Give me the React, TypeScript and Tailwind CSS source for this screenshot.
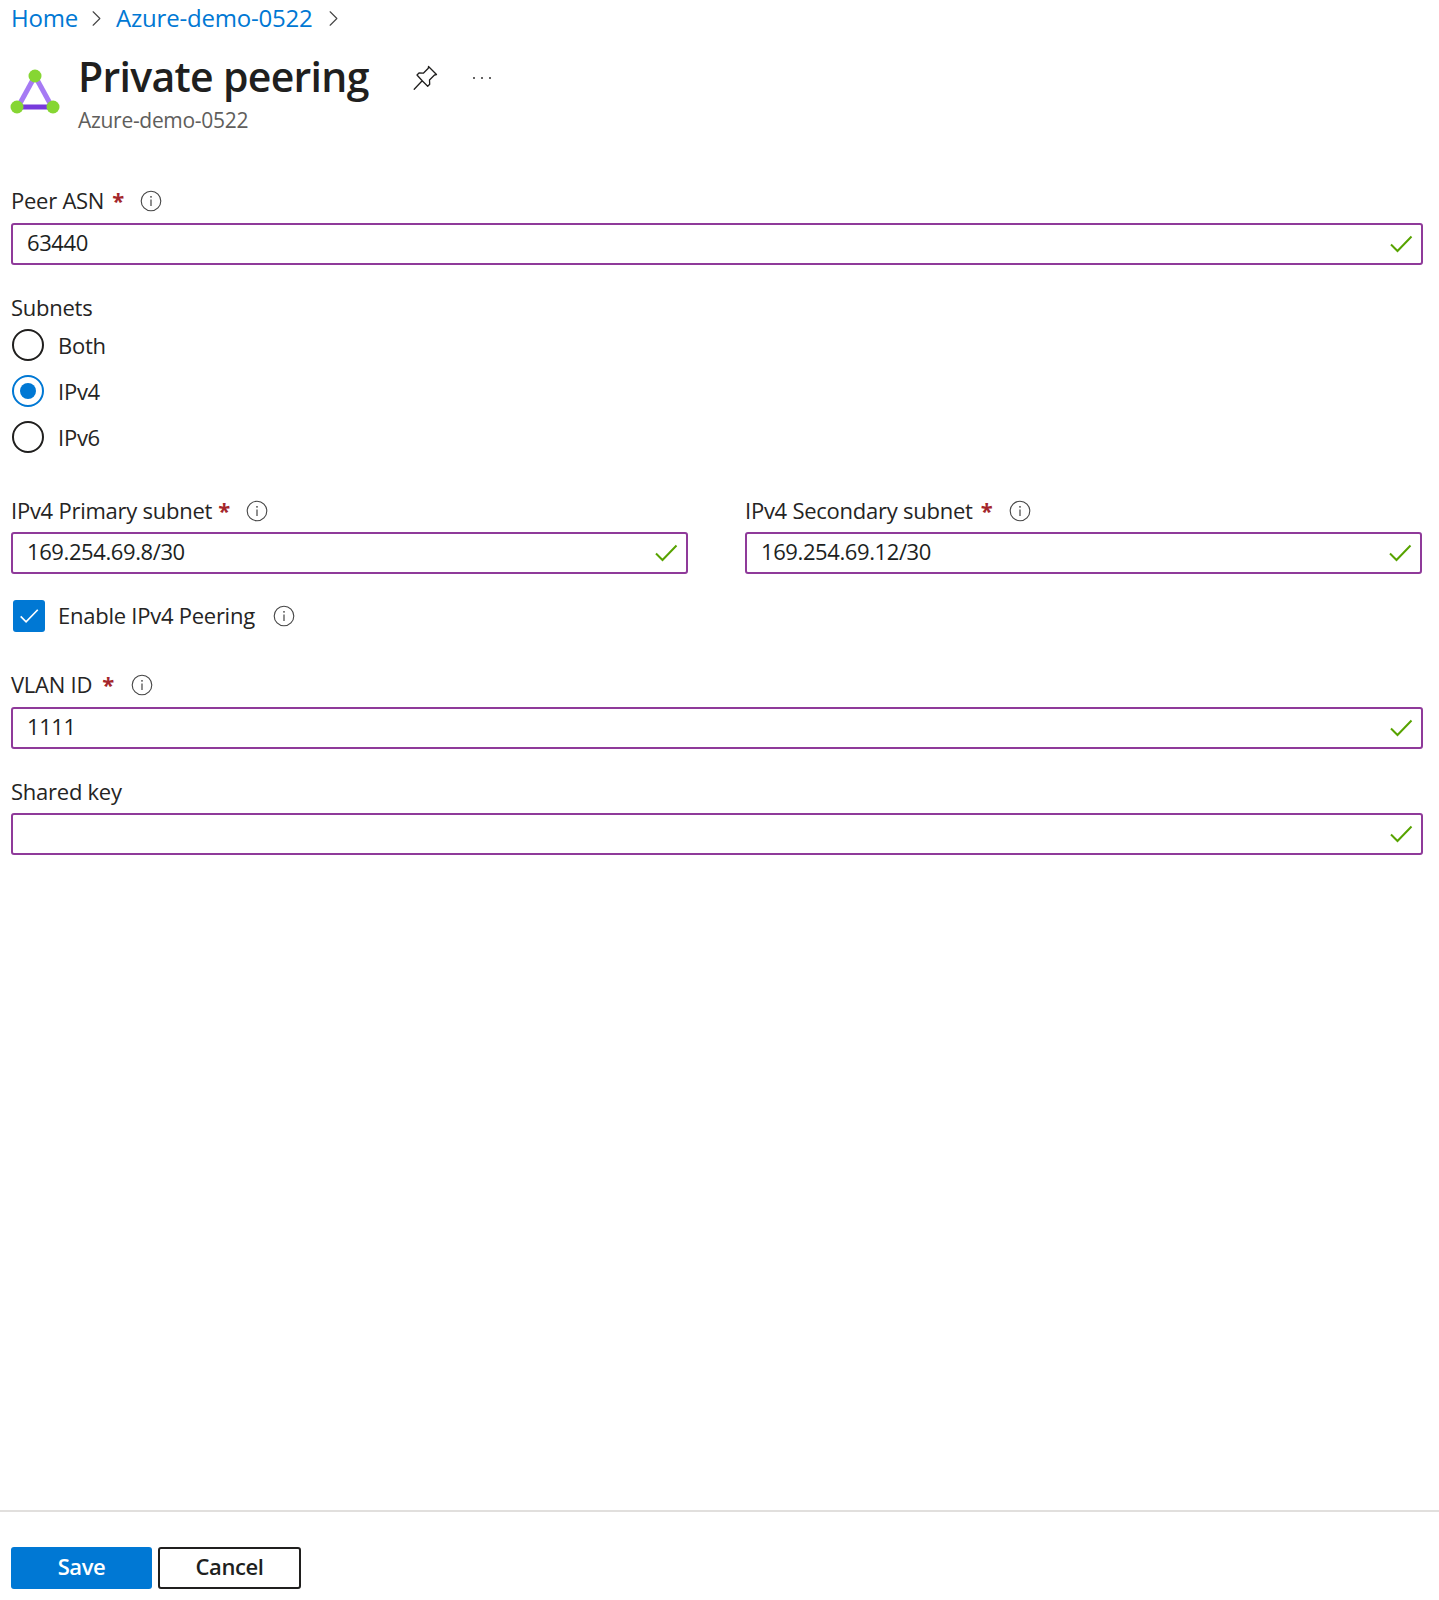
import { ChevronRight } from 'lucide-react'

const font = { fontFamily: '"Open Sans", "Noto Sans", sans-serif' }

function InfoIcon() {
  return (
    <svg width="22" height="22" viewBox="0 0 22 22" fill="none" className="shrink-0">
      <circle cx="11" cy="11" r="9.8" stroke="#444" strokeWidth="1.1" />
      <circle cx="11" cy="6.8" r="0.9" fill="#444" />
      <path d="M11 9.6v6.4" stroke="#444" strokeWidth="1.2" />
    </svg>
  )
}

function Check({ color = '#57a300', size = 24 }: { color?: string; size?: number }) {
  return (
    <svg width={size} height={size} viewBox="0 0 24 24" fill="none">
      <path d="M2 12.5l6.5 6.5L22.5 4.5" stroke={color} strokeWidth="2" />
    </svg>
  )
}

interface LabelProps {
  text: string
  required?: boolean
  starGap?: string
  gap?: string
}

function Label({ text, required, starGap = 'ml-2', gap = 'ml-4' }: LabelProps) {
  return (
    <div className="flex items-center h-[30px] text-[22px] text-[#252423] tracking-[-0.25px]">
      <span className="mb-[2px]">{text}</span>
      {required && <span className={`${starGap} mb-[2px] text-[#a4262c] font-bold`}>*</span>}
      {required && (
        <span className={gap}>
          <InfoIcon />
        </span>
      )}
    </div>
  )
}

function Field({ value }: { value?: string }) {
  return (
    <div className="flex items-center justify-between h-[42px] border-2 border-[#8f3a9a] rounded-[3px] pl-[14px] pr-[8px] text-[22px] text-[#201f1e] tracking-[-0.4px]">
      <span className="mb-[3px]">{value}</span>
      <Check />
    </div>
  )
}

function Radio({ label, checked }: { label: string; checked?: boolean }) {
  return (
    <div className="flex items-center h-[46px] pl-[1px] text-[22px] text-[#252423] tracking-[-0.25px]">
      <span
        className={`flex items-center justify-center w-[32px] h-[32px] rounded-full border-2 ${
          checked ? 'border-[#0078d4]' : 'border-[#201f1e]'
        }`}
      >
        {checked && <span className="w-[16px] h-[16px] rounded-full bg-[#0078d4]" />}
      </span>
      <span className="ml-[14px]">{label}</span>
    </div>
  )
}

export default function App() {
  return (
    <div className="relative h-[1600px] bg-white overflow-hidden flex flex-col" style={font}>
      <div className="flex items-center h-[36px] pl-[11px] text-[24px] text-[#0078d4] tracking-[-0.2px]">
        <span>Home</span>
        <ChevronRight size={27} strokeWidth={1} className="ml-[5px] text-[#444]" />
        <span className="ml-[6px]">Azure-demo-0522</span>
        <ChevronRight size={27} strokeWidth={1} className="ml-[7px] text-[#444]" />
      </div>

      <div className="flex pl-[10px] h-[104px]">
        <svg width="50" height="50" viewBox="0 0 50 50" fill="none" className="mt-[32px] shrink-0">
          <path d="M25 8L8 39" stroke="#a67af4" strokeWidth="5" />
          <path d="M25 8l17 31" stroke="#a67af4" strokeWidth="5" />
          <path d="M8 39h34" stroke="#773adc" strokeWidth="5" />
          <circle cx="25" cy="8" r="6.5" fill="#86d633" />
          <circle cx="7" cy="39" r="6.5" fill="#86d633" />
          <circle cx="43" cy="39" r="6.5" fill="#86d633" />
        </svg>
        <div className="ml-[18px]">
          <h1 className="mt-[15px] h-[50px] leading-[50px] text-[41px] font-semibold text-[#201f1e] tracking-[-0.7px]">
            Private peering
          </h1>
          <p className="mt-[5px] text-[21px] leading-[28px] text-[#605e5c] tracking-[-0.3px]">Azure-demo-0522</p>
        </div>
        <svg width="28" height="28" viewBox="0 0 28 28" fill="none" className="ml-[42px] mt-[28px] shrink-0">
          <path
            d="M17.5 2.5l8 8-2 .5-5 5 .2 4.3-2 2-5.5-5.5-8 8.5 8-8.5L6 11l2-2 4.3.2 5-5z"
            stroke="#201f1e"
            strokeWidth="1.3"
            strokeLinejoin="round"
          />
        </svg>
        <div className="ml-[34px] mt-[41px] flex gap-[6px] shrink-0">
          <span className="w-[2px] h-[2px] rounded-full bg-[#323130]" />
          <span className="w-[2px] h-[2px] rounded-full bg-[#323130]" />
          <span className="w-[2px] h-[2px] rounded-full bg-[#323130]" />
        </div>
      </div>

      <div className="pl-[11px] pr-[16px] flex flex-col">
        <div className="mt-[46px]">
          <Label text="Peer ASN" required />
        </div>
        <div className="mt-[7px]">
          <Field value="63440" />
        </div>

        <div className="mt-[28px]">
          <Label text="Subnets" />
        </div>
        <div className="mt-[-1px] flex flex-col">
          <Radio label="Both" />
          <Radio label="IPv4" checked />
          <Radio label="IPv6" />
        </div>

        <div className="mt-[36px] mr-[1px] grid grid-cols-2 gap-x-[57px]">
          <div>
            <Label text="IPv4 Primary subnet" required starGap="ml-[6px]" gap="ml-[16px]" />
            <div className="mt-[6px]">
              <Field value="169.254.69.8/30" />
            </div>
          </div>
          <div>
            <Label text="IPv4 Secondary subnet" required starGap="ml-[8px]" gap="ml-[17px]" />
            <div className="mt-[6px]">
              <Field value="169.254.69.12/30" />
            </div>
          </div>
        </div>

        <div className="mt-[26px] flex items-center h-[32px] pl-[2px] text-[22px] text-[#252423] tracking-[-0.25px]">
          <span className="flex items-center justify-center w-[32px] h-[32px] rounded-[3px] bg-[#0078d4]">
            <Check color="#ffffff" size={20} />
          </span>
          <span className="ml-[13px] mb-[2px]">Enable IPv4 Peering</span>
          <span className="ml-[18px]">
            <InfoIcon />
          </span>
        </div>

        <div className="mt-[38px]">
          <Label text="VLAN ID" required starGap="ml-[10px]" gap="ml-[17px]" />
        </div>
        <div className="mt-[7px]">
          <Field value="1111" />
        </div>

        <div className="mt-[28px]">
          <Label text="Shared key" />
        </div>
        <div className="mt-[6px]">
          <Field />
        </div>
      </div>

      <div className="mt-auto border-t-2 border-[#e1dfdd] h-[90px] pl-[11px] pt-[35px] flex gap-[6px]">
        <button className="w-[141px] h-[42px] pb-[3px] rounded-[3px] bg-[#0078d4] text-white text-[22px] font-semibold tracking-[-0.4px]">
          Save
        </button>
        <button className="w-[143px] h-[42px] pb-[3px] rounded-[3px] border-2 border-[#201f1e] bg-white text-[#201f1e] text-[22px] font-semibold tracking-[-0.4px]">
          Cancel
        </button>
      </div>
    </div>
  )
}
